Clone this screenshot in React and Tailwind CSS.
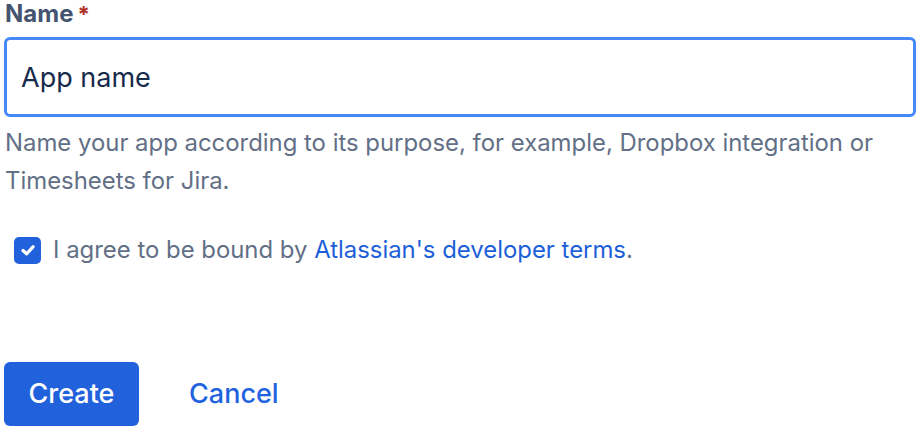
export default function App() {
  return (
    <div className="w-[920px] h-[430px] bg-white px-[4px] font-['Inter',sans-serif] overflow-hidden">
      <div className="flex items-center h-[28px] pl-[1px] text-[24px] leading-[28px] font-bold text-[#44546f]">
        <span>Name</span>
        <span className="ml-[4px] text-[#ae2e24] text-[22px]">*</span>
      </div>
      <div className="mt-[9px] h-[80px] w-[912px] rounded-[6px] border-[3px] border-[#4688f5] flex items-center pl-[14px]">
        <span className="text-[27px] text-[#172b4d] translate-y-[1px]">App name</span>
      </div>
      <p className="mt-[7px] pl-[1px] text-[23.9px] leading-[38px] text-[#626f86]">
        Name your app according to its purpose, for example, Dropbox integration or
        <br />
        Timesheets for Jira.
      </p>
      <div className="mt-[36px] flex items-center h-[28px] pl-[10px]">
        <div className="w-[27px] h-[27px] rounded-[5px] bg-[#2161dc] flex items-center justify-center">
          <svg width="20" height="20" viewBox="0 0 20 20" fill="none">
            <path d="M5 10.5 L8.6 13.8 L15 6.8" stroke="white" strokeWidth="3.2" strokeLinecap="round" strokeLinejoin="round" />
          </svg>
        </div>
        <span className="ml-[12px] text-[23.9px] text-[#626f86]">
          I agree to be bound by <span className="text-[#1d5fd9]">Atlassian's developer terms</span>.
        </span>
      </div>
      <div className="mt-[98px] flex items-center">
        <button className="w-[135px] h-[64px] rounded-[6px] bg-[#2161dc] text-white text-[27px] font-medium">Create</button>
        <button className="ml-[50px] text-[27px] font-medium text-[#1f63e1]">Cancel</button>
      </div>
    </div>
  );
}
